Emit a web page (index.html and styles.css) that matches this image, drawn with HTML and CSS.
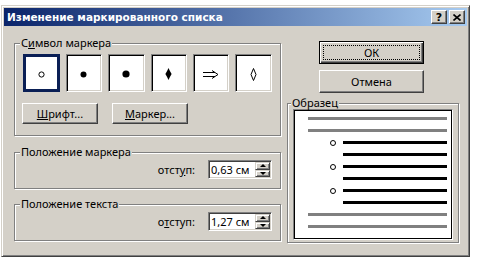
FILE: index.html
```html
<!DOCTYPE html>
<html lang="ru">
<head>
    <meta charset="UTF-8">
    <title>Изменение маркированного списка</title>
    <link rel="stylesheet" href="styles.css">
</head>
<body>

    <div class="window">
        <div class="titlebar">
            <span class="title">Изменение маркированного списка</span>
            <div class="title-buttons">
                <span class="tbtn tbtn-help">?</span>
                <span class="tbtn">
                    <svg width="8" height="7" viewBox="0 0 8 7">
                        <path d="M0.5 0.5 L7.5 6.5 M7.5 0.5 L0.5 6.5" stroke="#000" stroke-width="1.6" fill="none"/>
                    </svg>
                </span>
            </div>
        </div>

        <div class="content">
            <div class="left">
                <fieldset class="group group-symbol">
                    <legend>С<u>и</u>мвол маркера</legend>
                    <div class="markers">
                        <div class="marker selected">
                            <svg width="7" height="7" viewBox="0 0 7 7"><circle cx="3.5" cy="3.5" r="2.6" fill="none" stroke="#000" stroke-width="1"/></svg>
                        </div>
                        <div class="marker">
                            <svg width="7" height="7" viewBox="0 0 7 7"><circle cx="3.5" cy="3.5" r="3" fill="#000"/></svg>
                        </div>
                        <div class="marker">
                            <svg width="8" height="8" viewBox="0 0 8 8"><circle cx="4" cy="4" r="3.6" fill="#000"/></svg>
                        </div>
                        <div class="marker">
                            <svg width="7" height="12" viewBox="0 0 7 12"><polygon points="3.5,0 4.8,2.8 6.6,6 4.8,9.2 3.5,12 2.2,9.2 0.4,6 2.2,2.8" fill="#000"/></svg>
                        </div>
                        <div class="marker">
                            <svg width="16" height="9" viewBox="0 0 16 9"><path d="M0 2.5 H12 M0 6.5 H12 M9 0.5 L15 4.5 L9 8.5" fill="none" stroke="#000" stroke-width="1"/></svg>
                        </div>
                        <div class="marker">
                            <svg width="7" height="13" viewBox="0 0 7 13"><polygon points="3.5,0.5 6,6.5 3.5,12.5 1,6.5" fill="none" stroke="#000" stroke-width="1"/></svg>
                        </div>
                    </div>
                    <div class="marker-buttons">
                        <button class="btn btn-small"><u>Ш</u>рифт...</button>
                        <button class="btn btn-small"><u>М</u>аркер...</button>
                    </div>
                </fieldset>

                <fieldset class="group group-indent">
                    <legend>Положение маркера</legend>
                    <div class="indent-row">
                        <label>отст<u>у</u>п:</label>
                        <div class="spin-field">
                            <span class="spin-value">0,63 см</span>
                            <div class="spin">
                                <span class="spin-up"></span>
                                <span class="spin-down"></span>
                            </div>
                        </div>
                    </div>
                </fieldset>

                <fieldset class="group group-indent group-text">
                    <legend>Положение текста</legend>
                    <div class="indent-row">
                        <label>о<u>т</u>ступ:</label>
                        <div class="spin-field">
                            <span class="spin-value">1,27 см</span>
                            <div class="spin">
                                <span class="spin-up"></span>
                                <span class="spin-down"></span>
                            </div>
                        </div>
                    </div>
                </fieldset>
            </div>

            <div class="right">
                <button class="btn btn-wide btn-default"><span class="focus">ОК</span></button>
                <button class="btn btn-wide btn-cancel">Отмена</button>

                <fieldset class="group group-sample">
                    <legend>Образец</legend>
                    <div class="preview">
                        <div class="line gray"></div>
                        <div class="line gray"></div>
                        <div class="bullet-row"><span class="bullet"></span><div class="line black"></div></div>
                        <div class="line black indented"></div>
                        <div class="bullet-row"><span class="bullet"></span><div class="line black"></div></div>
                        <div class="line black indented"></div>
                        <div class="bullet-row"><span class="bullet"></span><div class="line black"></div></div>
                        <div class="line black indented"></div>
                        <div class="line gray"></div>
                        <div class="line gray"></div>
                    </div>
                </fieldset>
            </div>
        </div>
    </div>

</body>
</html>
```

FILE: styles.css
```css
body {
    margin: 0;
    background-color: #fff;
    font-family: "Noto Sans", "DejaVu Sans", sans-serif;
    font-size: 11px;
    line-height: 13px;
    color: #000;
}
.window {
    box-sizing: border-box;
    width: 469px;
    height: 252px;
    margin: 5px 0 0 1px;
    padding: 2px;
    background-color: #d4d0c8;
    border: 1px solid;
    border-color: #d4d0c8 #404040 #404040 #d4d0c8;
    box-shadow: inset 1px 1px 0 #fff, inset -1px -1px 0 #808080;
}
.titlebar {
    height: 18px;
    display: flex;
    align-items: center;
    justify-content: space-between;
    padding: 0 2px 0 3px;
    background: linear-gradient(to right, #0a246a, #a6caf0);
}
.title {
    color: #fff;
    font-family: "DejaVu Sans", Verdana, sans-serif;
    font-size: 10.5px;
    font-weight: bold;
}
.title-buttons {
    display: flex;
    gap: 2px;
}
.tbtn {
    box-sizing: border-box;
    width: 16px;
    height: 14px;
    display: flex;
    align-items: center;
    justify-content: center;
    background-color: #d4d0c8;
    border: 1px solid;
    border-color: #fff #404040 #404040 #fff;
    box-shadow: inset -1px -1px 0 #808080;
}
.tbtn-help {
    font-family: "DejaVu Sans", Verdana, sans-serif;
    font-weight: bold;
    font-size: 11px;
    line-height: 1;
}

.content {
    display: flex;
    gap: 6px;
    padding: 11px 0 0 10px;
}
.left {
    width: 267px;
}
.right {
    width: 172px;
    display: flex;
    flex-direction: column;
}

/* рамки групп */
.group {
    margin: 0;
    min-width: 0;
    padding: 0 8px;
    border: 1px solid #808080;
    box-shadow: 1px 1px 0 #fff, inset 1px 1px 0 #fff;
}
.group legend {
    margin-left: -3px;
    padding: 0 1px;
    line-height: 12px;
    background-color: #d4d0c8;
}

.group-symbol {
    padding-top: 5px;
    padding-bottom: 11px;
}
.markers {
    display: flex;
    gap: 6px;
}
.marker {
    box-sizing: border-box;
    width: 37px;
    height: 38px;
    display: flex;
    align-items: center;
    justify-content: center;
    padding-top: 2px;
    background-color: #fff;
    border: 1px solid;
    border-color: #808080 #fff #fff #808080;
    box-shadow: inset 1px 1px 0 #000, inset -1px -1px 0 #d4d0c8;
}
.marker.selected {
    border: 3px solid #0a1f55;
    box-shadow: 0 0 0 1px #d4d0c8;
}
.marker-buttons {
    display: flex;
    gap: 14px;
    margin: 11px 0 0 -1px;
}

.btn {
    box-sizing: border-box;
    font: inherit;
    color: #000;
    padding: 0;
    background-color: #d4d0c8;
    border: 1px solid;
    border-color: #fff #404040 #404040 #fff;
    box-shadow: inset -1px -1px 0 #808080;
}
.btn-small {
    width: 76px;
    height: 21px;
}
.btn-wide {
    width: 105px;
    height: 23px;
    margin-left: 32px;
}
.btn-default {
    margin-top: 4px;
    display: flex;
    padding: 3px;
    border: 1px solid #000;
    box-shadow: inset 1px 1px 0 #fff, inset -1px -1px 0 #404040, inset -2px -2px 0 #808080;
}
.btn-default .focus {
    flex: 1;
    display: flex;
    align-items: center;
    justify-content: center;
    border: 1px dotted #000;
}
.btn-cancel {
    margin-top: 6px;
}

/* отступы */
.group-indent {
    margin-top: 10px;
    padding-top: 2px;
    padding-bottom: 9px;
}
.group-text {
    margin-top: 9px;
}
.indent-row {
    display: flex;
    align-items: center;
    justify-content: flex-end;
    gap: 13px;
}
.spin-field {
    box-sizing: border-box;
    width: 64px;
    height: 19px;
    display: flex;
    align-items: center;
    padding: 1px;
    background-color: #fff;
    border: 1px solid;
    border-color: #808080 #fff #fff #808080;
    box-shadow: inset 1px 1px 0 #404040, inset -1px -1px 0 #d4d0c8;
}
.spin-value {
    flex: 1;
    padding-left: 1px;
}
.spin {
    width: 15px;
    height: 15px;
    display: flex;
    flex-direction: column;
}
.spin span {
    box-sizing: border-box;
    flex: 1;
    display: flex;
    align-items: center;
    justify-content: center;
    background-color: #d4d0c8;
    border: 1px solid;
    border-color: #d4d0c8 #404040 #404040 #d4d0c8;
    box-shadow: inset 1px 1px 0 #fff, inset -1px -1px 0 #808080;
}
.spin-up::before {
    content: "";
    border-left: 3px solid transparent;
    border-right: 3px solid transparent;
    border-bottom: 3px solid #000;
}
.spin-down::before {
    content: "";
    border-left: 3px solid transparent;
    border-right: 3px solid transparent;
    border-top: 3px solid #000;
}

/* образец */
.group-sample {
    margin-top: 4px;
    padding: 0 5px 2px;
}
.group-sample legend {
    margin-left: -2px;
}
.preview {
    display: flex;
    flex-direction: column;
    gap: 9px;
    padding: 7px 5px 11px 14px;
    background-color: #fff;
    border: 1px solid;
    border-color: #808080 #fff #fff #808080;
    box-shadow: inset 1px 1px 0 #000, inset -1px -1px 0 #000;
}
.line {
    height: 3px;
}
.line.gray {
    background-color: #808080;
}
.line.black {
    background-color: #000;
}
.line.indented {
    margin-left: 35px;
}
.bullet-row {
    height: 3px;
    display: flex;
    align-items: center;
    padding-left: 22px;
}
.bullet-row .line {
    flex: 1;
    margin-left: 7px;
}
.bullet {
    box-sizing: border-box;
    width: 6px;
    height: 6px;
    flex-shrink: 0;
    border: 1px solid #000;
    border-radius: 50%;
}
```
